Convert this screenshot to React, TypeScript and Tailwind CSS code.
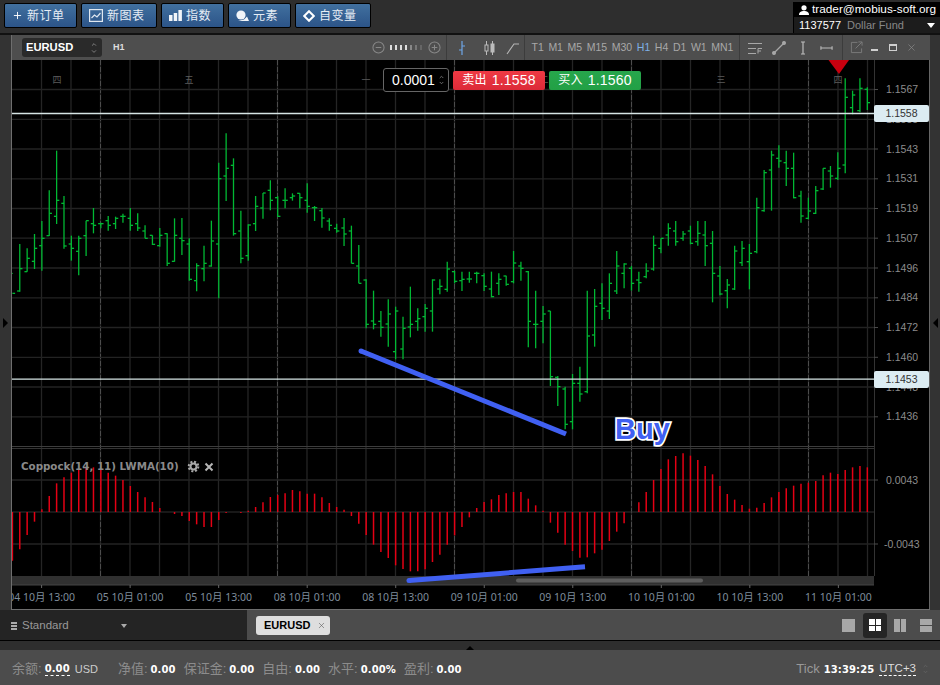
import { ChevronDown, ChevronUp, Plus, X } from 'lucide-react'

const sans = "[font-family:'Liberation_Sans','Noto_Sans_CJK_SC',sans-serif]"
const boldNum = "[font-family:'DejaVu_Sans',sans-serif] font-bold text-[10px] tracking-[0.1px] text-white"

// bars as [high, low, open, close], read off the chart at 3x, so y = base + v / 3
const segA = [
  [460, 461, 460, 520], [372, 515, 513, 446], [385, 455, 455, 415], [342, 447, 424, 385], [303, 452, 377, 355],
  [211, 348, 347, 280], [92, 312, 289, 241], [228, 386, 250, 378], [347, 422, 372, 385], [347, 466, 394, 355],
  [302, 408, 347, 302], [264, 340, 311, 316], [308, 325, 311, 311], [288, 332, 302, 316], [290, 327, 311, 295],
  [281, 308, 289, 289], [264, 332, 295, 316], [280, 333, 311, 324], [316, 355, 333, 355], [346, 375, 346, 373],
  [324, 380, 377, 346], [340, 438, 341, 430], [295, 425, 424, 346], [294, 405, 355, 362], [355, 482, 372, 478],
  [430, 514, 482, 437], [377, 484, 446, 430], [302, 440, 438, 363], [128, 535, 372, 176], [40, 243, 168, 145],
  [115, 347, 136, 341], [272, 430, 333, 415], [313, 422, 407, 315], [228, 333, 311, 259], [219, 296, 264, 219],
  [181, 271, 211, 241], [229, 290, 233, 289], [205, 265, 241, 241], [220, 242, 233, 228], [220, 265, 220, 233],
  [190, 278, 241, 259], [258, 303, 263, 263], [264, 323, 272, 294], [295, 332, 303, 316], [311, 338, 325, 333],
]
const segB = [
  [-66, 18, -36, -18], [-43, 70, -27, 70], [15, 130, 78, 130], [118, 265, 120, 253], [152, 268, 243, 253],
  [213, 290, 244, 262], [178, 320, 252, 222], [200, 358, 335, 213], [230, 358, 327, 265], [140, 292, 261, 253],
  [205, 272, 244, 236], [192, 275, 230, 205], [118, 275, 213, 120], [118, 163, 147, 139], [65, 155, 148, 87],
  [93, 130, 95, 124], [95, 153, 122, 118], [95, 128, 117, 117], [95, 130, 100, 100], [100, 153, 107, 139],
  [95, 172, 147, 170], [100, 165, 130, 118], [107, 137, 108, 133], [33, 130, 125, 69], [65, 122, 78, 85],
  [93, 322, 95, 244], [152, 325, 253, 253], [198, 310, 244, 222], [213, 438, 213, 410], [408, 498, 412, 440],
  [440, 568, 447, 553], [402, 568, 545, 430], [380, 485, 430, 462], [152, 460, 455, 288], [147, 320, 285, 199],
  [130, 240, 190, 205], [100, 237, 213, 130], [33, 162, 153, 78], [70, 145, 100, 72], [78, 152, 85, 130],
  [95, 155, 120, 128],
]
const segC = [
  [610, 655, 650, 633], [527, 632, 627, 556], [535, 580, 565, 535], [490, 557, 525, 505], [483, 557, 513, 545],
  [513, 542, 535, 522], [497, 553, 513, 550], [483, 557, 545, 520], [483, 618, 525, 557], [513, 727, 550, 640],
  [618, 706, 648, 702], [657, 745, 692, 675], [557, 690, 687, 573], [543, 618, 608, 565], [552, 688, 605, 580],
  [413, 580, 575, 443], [330, 455, 452, 338], [272, 452, 330, 285], [256, 323, 295, 303], [272, 378, 308, 325],
  [278, 415, 325, 413], [392, 488, 408, 468], [413, 478, 475, 453], [378, 462, 460, 392], [325, 390, 387, 325],
  [318, 383, 333, 348], [277, 360, 355, 325], [55, 340, 315, 112], [92, 163, 143, 105], [55, 157, 152, 85],
  [82, 150, 88, 128],
]
const bars = [
  ...segA.map((b) => b.map((v) => 120 + v / 3)),
  ...segB.map((b) => b.map((v) => 240 + v / 3)),
  ...segC.map((b) => b.map((v) => 60 + v / 3)),
]

// histogram tips, same 3x reading, y = 440 + v / 3, zero line at 216
const hist = [
  362, 328, 285, 245, 208, 168, 130, 112, 98, 90, 85, 82, 90, 98, 107, 120, 138, 156, 172, 186, 204, 216, 222, 228,
  243, 253, 261, 261, 240, 219, 216, 219, 212, 201, 187, 171, 165, 160, 150, 154, 161, 161, 172, 189, 201, 209, 228,
  251, 285, 314, 336, 354, 376, 387, 394, 394, 388, 366, 344, 314, 286, 261, 232, 204, 186, 178, 165, 160, 156, 156,
  176, 196, 212, 248, 278, 314, 333, 353, 352, 340, 329, 303, 275, 250, 216, 187, 156, 120, 87, 58, 48, 40, 47, 60,
  78, 103, 138, 162, 179, 195, 206, 203, 189, 172, 156, 145, 137, 131, 128, 123, 106, 98, 102, 90, 82, 78, 82,
]

const barX = (i: number) => 12.4 + i * 7.37

const priceRows = [89.5, 119.3, 149, 178.8, 208.5, 238.2, 268, 297.8, 327.5, 357.3, 387, 416.8]
const priceLabels = ['1.1567', '1.1555', '1.1543', '1.1531', '1.1519', '1.1507', '1.1496', '1.1484', '1.1472', '1.1460', '1.1448', '1.1436']
const gridX = Array.from({ length: 29 }, (_, i) => 41.5 + i * 29.5)
const dashedX = [100.5, 277.5, 454.5, 631.5, 808.5]
const days = [[57, '四'], [189, '五'], [366, '一'], [544, '二'], [721, '三'], [838, '四']] as const
const timeLabels = [
  '04 10月 13:00', '05 10月 01:00', '05 10月 13:00', '08 10月 01:00', '08 10月 13:00',
  '09 10月 01:00', '09 10月 13:00', '10 10月 01:00', '10 10月 13:00', '11 10月 01:00',
]
const timeframes = ['T1', 'M1', 'M5', 'M15', 'M30', 'H1', 'H4', 'D1', 'W1', 'MN1']
const stats = [
  ['净值:', '0.00'], ['保证金:', '0.00'], ['自由:', '0.00'], ['水平:', '0.00%'], ['盈利:', '0.00'],
]

function TopButton({ icon, label, width }: { icon: React.ReactNode; label: string; width: string }) {
  return (
    <button className={`${width} h-[25px] flex items-center gap-[4px] pl-[7px] border border-black rounded-[2px] bg-gradient-to-b from-[#41709f] to-[#2c5488] text-[#e6edf5] text-[12px] tracking-[0.5px]`}>
      {icon}
      <span>{label}</span>
    </button>
  )
}

function Chart() {
  return (
    <svg viewBox="12 60 918 550" className="block w-[918px] h-[550px]">
      <defs>
        <clipPath id="plot">
          <rect x="12" y="60" width="862" height="525" />
        </clipPath>
        <clipPath id="axis">
          <rect x="12" y="585" width="862" height="24" />
        </clipPath>
      </defs>

      {gridX.filter((x) => x < 870).map((x) => (
        <line key={x} x1={x} x2={x} y1="60" y2="576" stroke="#252525" strokeWidth="1.3" />
      ))}
      {dashedX.map((x) => (
        <line key={x} x1={x} x2={x} y1="60" y2="576" stroke="#4c4c4c" strokeWidth="1" strokeDasharray="5 2" />
      ))}
      {priceRows.map((y) => (
        <line key={y} x1="12" x2="874" y1={y} y2={y} stroke="#232323" strokeWidth="1.3" />
      ))}
      {[480, 544].map((y) => (
        <line key={y} x1="12" x2="874" y1={y} y2={y} stroke="#232323" strokeWidth="1.3" />
      ))}
      <line x1="12" x2="874" y1="512" y2="512" stroke="#303030" strokeWidth="1.2" />
      <line x1="12" x2="874" y1="446.5" y2="446.5" stroke="#3d3d3d" />
      <line x1="12" x2="874" y1="448.5" y2="448.5" stroke="#333" />
      <line x1="874.5" x2="874.5" y1="60" y2="576" stroke="#333" />

      {days.map(([x, d], i) => (
        <text key={i} x={x} y="83" textAnchor="middle" fontSize="9" fill="#5c5c5c" fontFamily="'Noto Sans CJK SC',sans-serif">{d}</text>
      ))}

      <g clipPath="url(#plot)" stroke="#00b833" strokeWidth="1.3">
        {bars.map(([hi, lo, o, c], i) => {
          const x = barX(i)
          return (
            <g key={i}>
              <line x1={x} x2={x} y1={hi} y2={lo} />
              <line x1={x - 2.7} x2={x} y1={o} y2={o} />
              <line x1={x} x2={x + 2.7} y1={c} y2={c} />
            </g>
          )
        })}
      </g>

      <g stroke="#e40014" strokeWidth="1.5">
        {hist.map((v, i) => (
          <line key={i} x1={barX(i)} x2={barX(i)} y1="512" y2={440 + v / 3} />
        ))}
      </g>

      <line x1="12" x2="874" y1="113.5" y2="113.5" stroke="#d5e4e4" strokeWidth="1.6" />
      <line x1="12" x2="874" y1="379.2" y2="379.2" stroke="#d5e4e4" strokeWidth="1.2" />
      <polygon points="828.5,60 849,60 839,74" fill="#c8000f" />

      <g fontSize="10.5" fill="#8c8c8c" fontFamily="'Liberation Sans',sans-serif">
        {priceRows.map((y, i) => (
          <g key={y}>
            <line x1="874" x2="878" y1={y} y2={y} stroke="#4a4a4a" />
            <text x="886" y={y + 3.6}>{priceLabels[i]}</text>
          </g>
        ))}
        <line x1="874" x2="878" y1="480" y2="480" stroke="#4a4a4a" />
        <text x="886" y="484">0.0043</text>
        <line x1="874" x2="878" y1="544" y2="544" stroke="#4a4a4a" />
        <text x="884" y="548">-0.0043</text>
      </g>

      <text x="21" y="470" fontSize="10.3" fontWeight="700" fill="#8a8a8a" fontFamily="'DejaVu Sans',sans-serif">Coppock(14, 11) LWMA(10)</text>
      <g fill="none" stroke="#a8a8a8">
        <circle cx="193.5" cy="466.5" r="3" strokeWidth="2" />
        <circle cx="193.5" cy="466.5" r="4.8" strokeWidth="2" strokeDasharray="2 1.77" />
      </g>
      <path d="M205.5 463.5l7 7m0-7l-7 7" stroke="#b5b5b5" strokeWidth="2" />

      <rect x="12" y="576" width="862" height="9" fill="#303030" />
      <rect x="516" y="578.5" width="187" height="4" rx="2" fill="#5e5e5e" />
      <line x1="12" x2="874" y1="585" y2="585" stroke="#444" />

      <g clipPath="url(#axis)">
        {timeLabels.map((t, i) => {
          const x = 41.6 + i * 88.53
          return (
            <g key={t}>
              <line x1={x} x2={x} y1="585" y2="588" stroke="#666" />
              <text x={x} y="601" textAnchor="middle" fontSize="10.5" fill="#7f8c9b" fontFamily="'Noto Sans','Noto Sans CJK SC',sans-serif">{t}</text>
            </g>
          )
        })}
      </g>

      <line x1="12" x2="930" y1="609.5" y2="609.5" stroke="#6e6e6e" />

      <line x1="361" y1="351" x2="566" y2="434" stroke="#4060f2" strokeWidth="5" />
      <circle cx="361" cy="351" r="2.5" fill="#4060f2" />
      <line x1="409" y1="580.6" x2="585" y2="566.8" stroke="#4060f2" strokeWidth="5" />
      <circle cx="409" cy="580.6" r="2.5" fill="#4060f2" />
      <text x="615" y="439" fontSize="29" fontWeight="700" fill="#4060f2" stroke="#fff" strokeWidth="3.5" paintOrder="stroke" fontFamily="'Liberation Sans',sans-serif">Buy</text>
    </svg>
  )
}

export default function App() {
  return (
    <div className={`${sans} w-[940px] h-[685px] overflow-hidden bg-[#2c2c2c] flex flex-col`}>
      <div className="h-[33px] flex items-start bg-[#2e2e2e]">
        <div className="flex gap-[4px] pt-[3px] pl-[4px]">
          <TopButton width="w-[73px]" label="新订单" icon={<Plus className="w-[11px] h-[11px] text-white" strokeWidth={2} />} />
          <TopButton
            width="w-[76px]"
            label="新图表"
            icon={
              <svg viewBox="0 0 14 13" className="w-[14px] h-[13px]" fill="none" stroke="#dfe7f0" strokeWidth="1.2">
                <rect x="0.6" y="0.6" width="12.8" height="11.8" />
                <path d="M2.5 9l3-3 2.5 2L11.5 4" />
              </svg>
            }
          />
          <TopButton
            width="w-[63px]"
            label="指数"
            icon={
              <svg viewBox="0 0 13 11" className="w-[13px] h-[11px]" fill="#f2f5f9">
                <rect x="0" y="5" width="3.5" height="6" />
                <rect x="4.7" y="3" width="3.5" height="8" />
                <rect x="9.4" y="0" width="3.5" height="11" />
              </svg>
            }
          />
          <TopButton
            width="w-[63px]"
            label="元素"
            icon={
              <svg viewBox="0 0 13 12" className="w-[13px] h-[12px]" fill="#f2f5f9">
                <circle cx="5" cy="5" r="4.6" />
                <path d="M2 11h11l-2-4.5L8 9.5z" />
              </svg>
            }
          />
          <TopButton
            width="w-[76px]"
            label="自变量"
            icon={
              <svg viewBox="0 0 12 12" className="w-[12px] h-[12px]" fill="none" stroke="#fff" strokeWidth="2">
                <path d="M6 1.2L10.8 6 6 10.8 1.2 6z" />
              </svg>
            }
          />
        </div>
        <div className="ml-auto mt-[2px] w-[147px] h-[31px] bg-black whitespace-nowrap">
          <div className="h-[15px] flex items-center gap-[3px] pl-[6px] pt-px text-white text-[11.8px]">
            <svg viewBox="0 0 10 10" className="w-[10px] h-[10px]" fill="#fff">
              <circle cx="5" cy="2.8" r="2.6" />
              <path d="M0 10c0-3 2-4 5-4s5 1 5 4z" />
            </svg>
            <span>trader@mobius-soft.org</span>
          </div>
          <div className="h-[16px] ml-px flex items-center gap-[6px] bg-[#1c1c1c] pl-[5px] text-[11px]">
            <span className="text-white">1137577</span>
            <span className="text-[#888]">Dollar Fund</span>
            <span className="ml-auto mr-[5px] border-x-[4px] border-x-transparent border-t-[5px] border-t-white" />
          </div>
        </div>
      </div>

      <div className="h-[577px] flex border-t-2 border-black/60">
        <div className="w-[12px] bg-[#333] border-r border-[#6e6e6e] flex items-center justify-center">
          <span className="border-y-[5px] border-y-transparent border-l-[5px] border-l-black" />
        </div>

        <div className="w-[918px] flex flex-col">
          <div className="h-[25px] bg-[#4e4e4e] flex items-center text-[#a8a8a8] text-[10.5px]">
            <div className="ml-[10px] w-[80px] h-[19px] rounded-[3px] bg-[#2a2a2a] flex items-center justify-between px-[4px] text-white text-[11.2px] font-bold">
              EURUSD
              <span className="flex flex-col text-[#888]">
                <ChevronUp className="w-[8px] h-[7px]" strokeWidth={3} />
                <ChevronDown className="w-[8px] h-[7px]" strokeWidth={3} />
              </span>
            </div>
            <span className="ml-[11px] text-[9px] font-bold text-[#ddd]">H1</span>

            <svg viewBox="0 0 14 14" className="ml-[247px] w-[13px] h-[13px]" fill="none" stroke="#888" strokeWidth="1.1">
              <circle cx="7" cy="7" r="6" />
              <path d="M4 7h6" />
            </svg>
            <div className="ml-[5px] flex gap-[3px] items-center">
              {['#ddd', '#ddd', '#ddd', '#ddd', '#888', '#777', '#666'].map((c, i) => (
                <span key={i} className="w-[2px] h-[5px]" style={{ backgroundColor: c }} />
              ))}
            </div>
            <svg viewBox="0 0 14 14" className="ml-[6px] w-[13px] h-[13px]" fill="none" stroke="#888" strokeWidth="1.1">
              <circle cx="7" cy="7" r="6" />
              <path d="M4 7h6M7 4v6" />
            </svg>

            <span className="ml-[5px] w-px h-full bg-[#3c3c3c]" />
            <svg viewBox="0 0 10 14" className="ml-[10px] w-[10px] h-[14px]" fill="none" stroke="#6ea6e6" strokeWidth="1.2">
              <path d="M5 0v14M2 9h3M5 5h3" />
            </svg>
            <svg viewBox="0 0 11 14" className="ml-[17px] w-[11px] h-[14px]" fill="#bbb" stroke="#bbb">
              <path d="M2.5 0v14M8.5 0v14" />
              <rect x="1" y="4" width="3" height="6" fill="#4e4e4e" />
              <rect x="7" y="3" width="3" height="8" />
            </svg>
            <svg viewBox="0 0 14 14" className="ml-[11px] w-[14px] h-[14px]" fill="none" stroke="#b5b5b5" strokeWidth="1.1">
              <path d="M1 13l7-10h5" />
            </svg>
            <span className="ml-[4px] w-px h-full bg-[#3c3c3c]" />

            <div className="ml-[7px] flex gap-[4.6px]">
              {timeframes.map((t) => (
                <span key={t} className={t === 'H1' ? 'text-[#7fb0e6]' : ''}>{t}</span>
              ))}
            </div>
            <span className="ml-[6px] w-px h-full bg-[#3c3c3c]" />

            <svg viewBox="0 0 14 12" className="ml-[8px] w-[14px] h-[12px]" fill="none" stroke="#a8a8a8">
              <path d="M0 1.5h14M0 6.5h8M0 11.5h8M10 11.5V6.5h4M10 9h3" />
            </svg>
            <svg viewBox="0 0 14 14" className="ml-[10px] w-[14px] h-[14px]" fill="none" stroke="#a8a8a8" strokeWidth="1.2">
              <path d="M2 12L12 2" />
              <circle cx="2" cy="12" r="1.4" fill="#a8a8a8" />
              <circle cx="12" cy="2" r="1.4" fill="#a8a8a8" />
            </svg>
            <svg viewBox="0 0 6 14" className="ml-[14px] w-[6px] h-[14px]" fill="none" stroke="#bbb" strokeWidth="1.2">
              <path d="M3 1v12M1 1h4M1 13h4" />
            </svg>
            <svg viewBox="0 0 14 6" className="ml-[14px] w-[13px] h-[6px]" fill="none" stroke="#bbb" strokeWidth="1.2">
              <path d="M1 3h12M1 1v4M13 1v4" />
            </svg>
            <span className="ml-[9px] w-px h-full bg-[#3c3c3c]" />

            <svg viewBox="0 0 14 14" className="ml-[7px] w-[13px] h-[13px]" fill="none" stroke="#7c7c7c">
              <path d="M8 1.5H1.5v11h11V8M6 8l7-7M9 1h4v4" />
            </svg>
            <span className="ml-[8px] mt-[5px] w-[7px] h-[2px] bg-[#d0d0d0]" />
            <span className="ml-[11px] w-[8px] h-[7px] border border-t-2 border-[#d0d0d0]" />
            <X className="ml-[9px] w-[11px] h-[11px] text-[#8a8a8a]" strokeWidth={1.5} />
          </div>

          <div className="relative h-[550px] bg-black border-r border-[#666]">
            <Chart />

            <div className="absolute left-[371px] top-[8px] flex items-center gap-[4px] text-white">
              <div className="w-[66px] h-[24px] bg-black border border-[#666] rounded-[3px] flex items-center justify-between pl-[8px] pr-[3px] text-[14px]">
                0.0001
                <span className="flex flex-col text-[#888]">
                  <ChevronUp className="w-[7px] h-[6px]" strokeWidth={3} />
                  <ChevronDown className="w-[7px] h-[6px]" strokeWidth={3} />
                </span>
              </div>
              <button className="w-[92px] h-[19px] rounded-[2px] bg-gradient-to-b from-[#ef3a44] to-[#dc2a38] text-[14px] tracking-[0.2px] flex items-center justify-center gap-[5px]">
                <span className="text-[12px]">卖出</span>1.1558
              </button>
              <button className="w-[92px] h-[19px] rounded-[2px] bg-gradient-to-b from-[#27a64c] to-[#22a045] text-[14px] tracking-[0.2px] flex items-center justify-center gap-[5px]">
                <span className="text-[12px]">买入</span>1.1560
              </button>
            </div>

            <div className="absolute left-[862px] top-[45px] w-[55px] h-[17px] rounded-[2px] bg-[#dcecf2] text-[#333] text-[10.5px] flex items-center justify-center">1.1558</div>
            <div className="absolute left-[862px] top-[311px] w-[55px] h-[17px] rounded-[2px] bg-[#dcecf2] text-[#333] text-[10.5px] flex items-center justify-center">1.1453</div>
          </div>
        </div>

        <div className="w-[10px] bg-[#333] flex items-center justify-center">
          <span className="border-y-[5px] border-y-transparent border-r-[5px] border-r-black" />
        </div>
      </div>

      <div className="h-[30px] flex bg-[#4c4c4c]">
        <div className="w-[247px] bg-[#242424] flex items-center pl-[11px] pt-[2px] text-[#999] text-[11.5px]">
          <span className="flex flex-col gap-[1.5px] mr-[5px]">
            <span className="w-[6px] h-[1.5px] bg-[#aaa]" />
            <span className="w-[6px] h-[1.5px] bg-[#aaa]" />
            <span className="w-[6px] h-[1.5px] bg-[#aaa]" />
          </span>
          Standard
          <span className="ml-[52px] border-x-[3.5px] border-x-transparent border-t-[4px] border-t-[#aaa]" />
        </div>
        <div className="ml-[9px] mt-[6px] w-[74px] h-[19px] rounded-[3px] bg-[#dedede] flex items-center pl-[8px] gap-[7px] text-black text-[11px] font-bold">
          EURUSD
          <X className="w-[9px] h-[9px] text-[#555]" strokeWidth={1.5} />
        </div>
        <div className="ml-auto mr-[8px] flex items-center">
          <span className="w-[13px] h-[13px] bg-[#a8a8a8]" />
          <span className="ml-[8px] w-[24px] h-[25px] rounded-[3px] bg-[#252525] flex items-center justify-center">
            <span className="w-[12px] h-[12px] grid grid-cols-2 gap-px">
              <span className="bg-white" />
              <span className="bg-white" />
              <span className="bg-white" />
              <span className="bg-white" />
            </span>
          </span>
          <span className="ml-[7px] w-[12px] h-[13px] grid grid-cols-2 gap-px">
            <span className="bg-[#a8a8a8]" />
            <span className="bg-[#a8a8a8]" />
          </span>
          <span className="ml-[14px] w-[12px] h-[13px] grid grid-rows-2 gap-px">
            <span className="bg-[#a8a8a8]" />
            <span className="bg-[#a8a8a8]" />
          </span>
        </div>
      </div>

      <div className="h-[10px] bg-[#2e2e2e] border-t border-black flex justify-center">
        <span className="border-x-[4px] border-x-transparent border-b-[4px] border-b-black mt-[1px]" />
      </div>

      <div className="h-[35px] bg-[#4c4c4c] flex items-center pt-[3px] pl-[12px] pr-[11px] text-[13px] text-[#8c8c8c]">
        <span>余额:</span>
        <span className={`ml-[3px] ${boldNum} border-b border-dashed border-white leading-[12px]`}>0.00</span>
        <span className="ml-[5px] text-[#ccc] text-[11px] mr-[20px]">USD</span>
        <div className="flex gap-[8px] items-center">
          {stats.map(([k, v]) => (
            <span key={k} className="flex items-center gap-[3px]">
              {k}
              <span className={boldNum}>{v}</span>
            </span>
          ))}
        </div>
        <span className="ml-auto text-[#999]">Tick</span>
        <span className={`ml-[4px] ${boldNum}`}>13:39:25</span>
        <span className="ml-[5px] text-[11.5px] text-[#ddd] border-b border-dashed border-white leading-[13px]">UTC+3</span>
        <span className="ml-[6px] flex flex-col text-[#666]">
          <ChevronUp className="w-[7px] h-[6px]" strokeWidth={3} />
          <ChevronDown className="w-[7px] h-[6px]" strokeWidth={3} />
        </span>
      </div>
    </div>
  )
}
